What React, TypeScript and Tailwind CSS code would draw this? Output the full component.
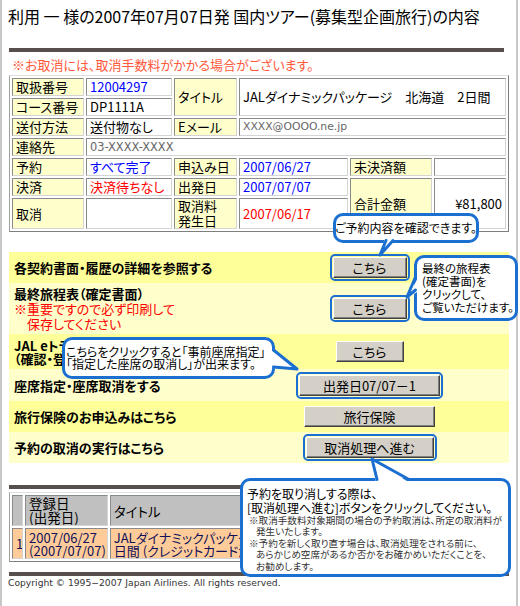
import React from "react";

const cell =
  "border border-t-[#8a8a8a] border-l-[#8a8a8a] border-r-[#d4d4d4] border-b-[#d4d4d4] px-[3px] py-0 align-middle text-left font-normal whitespace-nowrap overflow-hidden";
const lab = `${cell} bg-[#ffffcc]`;
const val = `${cell} bg-white`;

function Btn({ className, children }: { className: string; children: React.ReactNode }) {
  return (
    <button
      type="button"
      className={`h-[21px] bg-[#d4d0c8] border border-t-white border-l-white border-r-[#404040] border-b-[#404040] shadow-[inset_-1px_-1px_0_#808080] text-[13px] leading-[19px] text-black text-center ${className}`}
    >
      {children}
    </button>
  );
}

function Ring({ children }: { children: React.ReactNode }) {
  return <div className="flex rounded-[5px] border-2 border-[#1b6fd0] p-px">{children}</div>;
}

export default function App() {
  return (
    <div className="relative w-[520px] h-[606px] overflow-hidden bg-white text-black font-['Noto_Sans_CJK_JP',sans-serif] [font-feature-settings:'palt']">
      <div className="h-full w-[518px] border-x-2 border-[#c8c8c8] pl-[7px]">
        <h1 className="pt-[6px] -ml-px text-[16px] leading-[20px] font-normal whitespace-nowrap">
          利用 一 様の2007年07月07日発 国内ツアー(募集型企画旅行)の内容
        </h1>
        <div className="mt-[22px] h-[4px] w-[495px] bg-[#574f4d]" />
        <p className="mt-[5px] pl-[3px] text-[13px] leading-[16px] text-[#ff5a3c] whitespace-nowrap">
          ※お取消には、取消手数料がかかる場合がございます。
        </p>

        {/* reservation details */}
        <table className="mt-[2px] table-fixed w-[500px] border-separate border-spacing-[2px] border border-t-[#e0e0e0] border-l-[#a0a0a0] border-r-[#7f7f7f] border-b-[#7f7f7f] text-[13px] leading-[16px]">
          <colgroup>
            <col className="w-[72px]" />
            <col className="w-[86px]" />
            <col className="w-[63px]" />
            <col className="w-[109px]" />
            <col className="w-[82px]" />
            <col className="w-[72px]" />
          </colgroup>
          <tbody>
            <tr>
              <td className={`${lab} h-[18px]`}>取扱番号</td>
              <td className={`${val} text-[#0000ff]`}>12004297</td>
              <td className={lab} rowSpan={2}>タイトル</td>
              <td className={val} rowSpan={2} colSpan={3}>
                JALダイナミックパッケージ　北海道　2日間
              </td>
            </tr>
            <tr>
              <td className={`${lab} h-[18px]`}>コース番号</td>
              <td className={val}>DP1111A</td>
            </tr>
            <tr>
              <td className={`${lab} h-[18px]`}>送付方法</td>
              <td className={val}>送付物なし</td>
              <td className={lab}>Eメール</td>
              <td className={`${val} font-['DejaVu_Sans',sans-serif] text-[10.8px] text-[#666]`} colSpan={3}>
                XXXX@OOOO.ne.jp
              </td>
            </tr>
            <tr>
              <td className={`${lab} h-[18px]`}>連絡先</td>
              <td className={`${val} font-['DejaVu_Sans',sans-serif] text-[11.4px] text-[#666]`} colSpan={5}>
                03-XXXX-XXXX
              </td>
            </tr>
            <tr>
              <td className={`${lab} h-[18px]`}>予約</td>
              <td className={`${val} text-[#0000ff]`}>すべて完了</td>
              <td className={lab}>申込み日</td>
              <td className={`${val} text-[#0000ff]`}>2007/06/27</td>
              <td className={lab}>未決済額</td>
              <td className={val}></td>
            </tr>
            <tr>
              <td className={`${lab} h-[18px]`}>決済</td>
              <td className={`${val} text-[#ff0000]`}>決済待ちなし</td>
              <td className={lab}>出発日</td>
              <td className={`${val} text-[#0000ff]`}>2007/07/07</td>
              <td className={lab} rowSpan={2}>合計金額</td>
              <td className={`${val} text-right`} rowSpan={2}>¥81,800</td>
            </tr>
            <tr>
              <td className={`${lab} h-[31px]`}>取消</td>
              <td className={val}></td>
              <td className="border border-t-[#8a8a8a] border-l-[#8a8a8a] border-r-[#d4d4d4] border-b-[#d4d4d4] bg-[#ffffcc] px-[3px] py-0 align-middle text-left font-normal whitespace-nowrap leading-[14.5px]">
                取消料
                <br />
                発生日
              </td>
              <td className={`${val} text-[#ff0000]`}>2007/06/17</td>
            </tr>
          </tbody>
        </table>

        {/* actions */}
        <div className="mt-[20px] w-[500px] text-[13px]">
          <div className="flex h-[31px] items-center bg-[#ffff99]">
            <div className="w-[221px] shrink-0 pl-[5px] font-bold leading-[15px] whitespace-nowrap">
              各契約書面・履歴の詳細を参照する
            </div>
            <div className="flex flex-1 justify-center">
              <Ring>
                <Btn className="w-[74px]">こちら</Btn>
              </Ring>
            </div>
          </div>
          <div className="flex h-[51px] items-center bg-[#ffffcc]">
            <div className="w-[221px] shrink-0 pl-[5px] leading-[15px] whitespace-nowrap">
              <div className="font-bold">最終旅程表（確定書面）</div>
              <div className="text-[#ff0000]">※重要ですので必ず印刷して</div>
              <div className="pl-[13px] text-[#ff0000]">保存してください</div>
            </div>
            <div className="flex flex-1 justify-center">
              <Ring>
                <Btn className="w-[74px]">こちら</Btn>
              </Ring>
            </div>
          </div>
          <div className="flex h-[35px] items-center bg-[#ffff99]">
            <div className="w-[221px] shrink-0 pl-[5px] font-bold leading-[13px] whitespace-nowrap">
              <div>JAL eトラベルプラス</div>
              <div>（確認・登録）</div>
            </div>
            <div className="flex flex-1 justify-center">
              <Btn className="w-[68px]">こちら</Btn>
            </div>
          </div>
          <div className="flex h-[32px] items-center bg-[#ffffcc]">
            <div className="w-[221px] shrink-0 pl-[5px] font-bold leading-[15px] whitespace-nowrap">
              座席指定・座席取消をする
            </div>
            <div className="flex flex-1 justify-center">
              <Ring>
                <Btn className="w-[141px]">出発日07/07－1</Btn>
              </Ring>
            </div>
          </div>
          <div className="flex h-[31px] items-center bg-[#ffff99]">
            <div className="w-[221px] shrink-0 pl-[5px] font-bold leading-[15px] whitespace-nowrap">
              旅行保険のお申込みはこちら
            </div>
            <div className="flex flex-1 justify-center">
              <Btn className="w-[131px]">旅行保険</Btn>
            </div>
          </div>
          <div className="flex h-[31px] items-center bg-[#ffffcc]">
            <div className="w-[221px] shrink-0 pl-[5px] font-bold leading-[15px] whitespace-nowrap">
              予約の取消の実行はこちら
            </div>
            <div className="flex flex-1 justify-center">
              <Ring>
                <Btn className="w-[128px]">取消処理へ進む</Btn>
              </Ring>
            </div>
          </div>
        </div>

        {/* history */}
        <div className="mt-[22px] h-[4px] w-[500px] bg-[#574f4d]" />
        <table className="mt-[3px] table-fixed w-[500px] border-separate border-spacing-[2px] border border-t-[#e0e0e0] border-l-[#a0a0a0] border-r-[#7f7f7f] border-b-[#7f7f7f]">
          <colgroup>
            <col className="w-[11px]" />
            <col className="w-[82px]" />
            <col className="w-[393px]" />
          </colgroup>
          <tbody>
            <tr>
              <td className={`${cell} h-[31px] bg-[#c0c0c0]`}></td>
              <td className={`${cell} bg-[#c0c0c0] px-[2px] font-bold text-[13.5px] leading-[13.5px]`}>
                登録日
                <br />
                (出発日)
              </td>
              <td className={`${cell} bg-[#c0c0c0] font-bold text-[13.5px] leading-[14px]`}>タイトル</td>
            </tr>
            <tr className="text-[13px] leading-[13px] text-[#10105a]">
              <td className={`${cell} h-[31px] bg-[#ffcc99] px-[1px]`}>1</td>
              <td className={`${cell} bg-[#ffcc99] px-[1px]`}>
                2007/06/27
                <br />
                (2007/07/07)
              </td>
              <td className={`${cell} bg-[#ffcc99] px-[1px]`}>
                JALダイナミックパッケージ　北海道　2
                <br />
                日間 (クレジットカード決済)
              </td>
            </tr>
          </tbody>
        </table>
        <div className="mt-[10px] h-[4px] w-[500px] bg-[#574f4d]" />
        <p className="mt-px -ml-px font-['DejaVu_Sans',sans-serif] text-[9.2px] leading-[12px] text-[#333] whitespace-nowrap">
          Copyright © 1995−2007 Japan Airlines. All rights reserved.
        </p>
      </div>

      {/* callouts */}
      <div className="absolute left-[333px] top-[213px] flex h-[30px] w-[146px] items-center justify-center rounded-[10px] border-[3px] border-[#1b6fd0] bg-white text-[12px] leading-[14px] whitespace-nowrap">
        ご予約内容を確認できます。
      </div>
      <div className="absolute left-[414px] top-[255px] h-[66px] w-[104px] rounded-[10px] border-[3px] border-[#1b6fd0] bg-white pl-[5px] pt-[4px] text-[11.5px] leading-[13px] whitespace-nowrap">
        <div>最終の旅程表</div>
        <div>(確定書面)を</div>
        <div>クリックして、</div>
        <div>ご覧いただけます。</div>
      </div>
      <div className="absolute left-[62px] top-[337px] flex h-[42px] w-[213px] flex-col justify-center rounded-[10px] border-[3px] border-[#1b6fd0] bg-white pl-[1px] text-[12px] leading-[12px] whitespace-nowrap">
        <div>こちらをクリックすると「事前座席指定」</div>
        <div>「指定した座席の取消し」が出来ます。</div>
      </div>
      <div className="absolute left-[240px] top-[478px] h-[99px] w-[271px] rounded-[10px] border-[3px] border-[#1b6fd0] bg-white pl-[4px] pt-[6px] whitespace-nowrap">
        <div className="text-[12px] leading-[14px]">予約を取り消しする際は、</div>
        <div className="text-[12px] leading-[14px]">[取消処理へ進む]ボタンをクリックしてください。</div>
        <div className="text-[9.6px] leading-[11.4px] text-[#333]">
          <div className="pl-[2px]">※取消手数料対象期間の場合の予約取消は、所定の取消料が</div>
          <div className="pl-[9px]">発生いたします。</div>
          <div className="pl-[2px]">※予約を新しく取り直す場合は、取消処理をされる前に、</div>
          <div className="pl-[9px]">あらかじめ空席があるか否かをお確かめいただくことを、</div>
          <div className="pl-[9px]">お勧めします。</div>
        </div>
      </div>

      {/* callout tails */}
      <svg className="pointer-events-none absolute left-0 top-0" width="520" height="606" viewBox="0 0 520 606">
        <g fill="#fff">
          <polygon points="385,238 380,256 394,238" />
          <polygon points="419,276 407,298 419,291" />
          <polygon points="270,349 297,369 270,368" />
          <polygon points="376,483 372,459 410,483" />
        </g>
        <g fill="none" stroke="#1b6fd0" strokeWidth="3" strokeLinejoin="round" strokeLinecap="round">
          <polyline points="386,240.5 380,255 393,240.5" />
          <polyline points="415.5,277 407,297 415.5,290" />
          <polyline points="273.5,350 297,369 273.5,367" />
          <polyline points="377,479.5 372,459 409,479.5" />
        </g>
      </svg>
    </div>
  );
}
